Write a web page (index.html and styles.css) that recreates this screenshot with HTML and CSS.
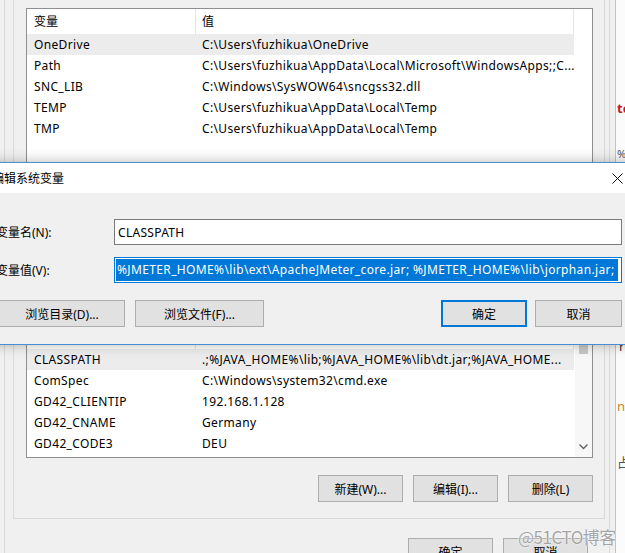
FILE: index.html
```html
<!DOCTYPE html>
<html lang="zh-CN">
<head>
<meta charset="utf-8">
<title>编辑系统变量</title>
<link rel="stylesheet" href="styles.css">
</head>
<body>
<div class="desk">
  <div class="win">
    <div class="frame">
      <div class="group">
        <div class="list list-user">
          <div class="lhead"><span class="h1">变量</span><span class="h2">值</span></div>
          <div class="row sel"><span class="c1">OneDrive</span><span class="c2">C:\Users\fuzhikua\OneDrive</span></div>
          <div class="row"><span class="c1">Path</span><span class="c2">C:\Users\fuzhikua\AppData\Local\Microsoft\WindowsApps;;C...</span></div>
          <div class="row"><span class="c1">SNC_LIB</span><span class="c2">C:\Windows\SysWOW64\sncgss32.dll</span></div>
          <div class="row"><span class="c1">TEMP</span><span class="c2">C:\Users\fuzhikua\AppData\Local\Temp</span></div>
          <div class="row"><span class="c1">TMP</span><span class="c2">C:\Users\fuzhikua\AppData\Local\Temp</span></div>
        </div>
        <div class="spacer"></div>
        <div class="list list-sys">
          <div class="cols">
            <div class="lhead"><span class="h1">变量</span><span class="h2">值</span></div>
            <div class="row sel"><span class="c1">CLASSPATH</span><span class="c2">.;%JAVA_HOME%\lib;%JAVA_HOME%\lib\dt.jar;%JAVA_HOME...</span></div>
            <div class="row"><span class="c1">ComSpec</span><span class="c2">C:\Windows\system32\cmd.exe</span></div>
            <div class="row"><span class="c1">GD42_CLIENTIP</span><span class="c2">192.168.1.128</span></div>
            <div class="row"><span class="c1">GD42_CNAME</span><span class="c2">Germany</span></div>
            <div class="row"><span class="c1">GD42_CODE3</span><span class="c2">DEU</span></div>
          </div>
          <div class="vscroll">
            <div class="thumb"></div>
            <svg class="chev" width="9" height="6" viewBox="0 0 9 6"><path d="M0.5 0.5 L4.5 4.5 L8.5 0.5" fill="none" stroke="#606060" stroke-width="1.3"/></svg>
          </div>
        </div>
        <div class="btnrow">
          <div class="btn">新建(W)...</div>
          <div class="btn">编辑(I)...</div>
          <div class="btn">删除(L)</div>
        </div>
      </div>
      <div class="winbtns">
        <div class="btn">确定</div>
        <div class="btn">取消</div>
      </div>
    </div>
  </div>
  <div class="web">
    <span class="frag f1">te</span>
    <span class="frag f2">%</span>
    <span class="frag f3">r</span>
    <span class="frag f4">n</span>
    <span class="frag f5">占</span>
  </div>
</div>

<div class="dialog">
  <div class="dlg-title">
    <span class="dlg-caption">编辑系统变量</span>
    <div class="close">
      <svg width="11" height="11" viewBox="0 0 11 11"><path d="M0.5 0.5 L10.5 10.5 M10.5 0.5 L0.5 10.5" stroke="#111" stroke-width="1" fill="none"/></svg>
    </div>
  </div>
  <div class="dlg-body">
    <div class="field">
      <span class="label">变量名(N):</span>
      <div class="input">CLASSPATH</div>
    </div>
    <div class="field field2">
      <span class="label">变量值(V):</span>
      <div class="input focus"><span class="selected">%JMETER_HOME%\lib\ext\ApacheJMeter_core.jar; %JMETER_HOME%\lib\jorphan.jar;</span></div>
    </div>
    <div class="dlg-btns">
      <div class="btn b-dir">浏览目录(D)...</div>
      <div class="btn b-file">浏览文件(F)...</div>
      <div class="grow"></div>
      <div class="btn b-ok default">确定</div>
      <div class="btn b-cancel">取消</div>
    </div>
  </div>
</div>

<div class="watermark">@51CTO博客</div>
</body>
</html>
```

FILE: styles.css
```css
* { box-sizing: border-box; margin: 0; padding: 0; }
html, body { width: 625px; height: 553px; overflow: hidden; }
body {
  background: #f0f0f0;
  font-family: "Noto Sans", "Noto Sans CJK SC", sans-serif;
  font-size: 12px;
  color: #000;
  position: relative;
}
.desk { display: flex; height: 553px; }
.win {
  width: 616px;
  flex: none;
  height: 553px;
  border-right: 1px solid #c4c4c4;
  box-shadow: inset -5px 0 0 #f0f0f0, inset -6px 0 0 #dadada;
}
.frame {
  margin-left: 4px;
  border-left: 1px solid #dadada;
  height: 100%;
  padding-left: 8px;
}
.group {
  width: 592px;
  border: 1px solid #d9d9d9;
  border-top: none;
  padding: 8px 11px 16px 12px;
}
.list {
  background: #fff;
  border: 1px solid #8f8f8f;
  width: 567px;
  overflow: hidden;
}
.list-user { height: 160px; }
.spacer { height: 155px; }
.list-sys { height: 135px; display: flex; }
.cols { width: 548px; }
.lhead { display: flex; height: 25px; align-items: center; width: 547px; }
.lhead .h1 {
  width: 169px; height: 25px; line-height: 25px;
  padding-left: 7px; border-right: 1px solid #e5e5e5;
}
.lhead .h2 {
  width: 378px; height: 25px; line-height: 25px;
  padding-left: 6px; border-right: 1px solid #e5e5e5;
}
.row {
  display: flex; height: 21px; line-height: 21px; width: 547px;
  white-space: nowrap; letter-spacing: 0.35px;
}
.row.sel { background: #ececec; }
.row .c1 { width: 175px; padding-left: 7px; flex: none; }
.row .c2 { flex: 1; overflow: hidden; }
.vscroll {
  width: 17px; flex: none;
  background: #f7f7f7;
  display: flex; flex-direction: column; align-items: center;
  justify-content: space-between;
  padding: 21px 0 7px;
}
.thumb { width: 9px; height: 9px; background: #c8c8c8; }
.chev { display: block; }
.btnrow {
  margin-top: 17px;
  display: flex; justify-content: flex-end; gap: 10px;
}
.btn {
  height: 27px;
  background: #e1e1e1;
  border: 1px solid #adadad;
  display: flex; align-items: center; justify-content: center;
  white-space: nowrap;
}
.btnrow .btn { width: 85px; }
.winbtns {
  margin-top: 19px;
  width: 575px;
  display: flex; justify-content: flex-end; gap: 10px;
}
.winbtns .btn { width: 85px; }

.web {
  flex: 1;
  background: #fbfbfb;
  display: flex; flex-direction: column;
  padding-left: 1px;
  font-size: 13px;
  line-height: 16px;
}
.frag { display: block; height: 16px; }
.f1 { margin-top: 100px; color: #c8141e; font-weight: bold; }
.f2 { margin-top: 30px; color: #555; font-size: 11px; }
.f3 { margin-top: 176px; color: #333; padding-left: 2px; }
.f4 { margin-top: 44px; color: #c58a2a; }
.f5 { margin-top: 40px; color: #555; }

.dialog {
  position: absolute;
  top: 162px;
  left: -20px;
  width: 661px;
  height: 183px;
  border: 1px solid #4a8ed0;
  box-shadow: 0 0 12px rgba(0, 0, 0, 0.28);
  font-family: "Noto Sans", "Noto Sans CJK SC", sans-serif;
}
.dlg-title {
  height: 30px;
  background: #fff;
  display: flex; align-items: center;
  padding-left: 11px;
  position: relative;
}
.close {
  position: absolute; right: 0; top: 0;
  width: 46px; height: 30px;
  display: flex; align-items: center; justify-content: center;
}
.close svg { display: block; }
.dlg-body {
  height: 151px;
  background: #f0f0f0;
  padding: 26px 18px 0 15px;
}
.field { display: flex; align-items: center; height: 26px; }
.field2 { margin-top: 12px; }
.label { width: 118px; flex: none; }
.input {
  width: 508px; height: 26px;
  background: #fff;
  border: 1px solid #7a7a7a;
  padding-left: 3px;
  display: flex; align-items: center;
  white-space: nowrap; overflow: hidden;
  letter-spacing: 0.3px;
}
.input.focus { border-color: #0078d7; padding: 1px; letter-spacing: 0.36px; }
.selected {
  background: #0078d7;
  color: #fff;
  height: 22px; line-height: 22px;
  width: 502px;
  overflow: hidden;
  padding-left: 1px;
}
.dlg-btns { margin-top: 17px; display: flex; gap: 10px; }
.b-dir { width: 126px; margin-left: 3px; }
.b-file { width: 129px; }
.grow { flex: 1; }
.b-ok { width: 86px; margin-right: -2px; }
.b-cancel { width: 87px; }
.default { border-color: #0078d7; box-shadow: inset 0 0 0 1px #0078d7; }

.watermark {
  position: absolute;
  left: 518px; top: 527px;
  font-size: 17px;
  line-height: 20px;
  color: #a5a5a5;
  font-family: "Noto Sans CJK SC", sans-serif;
  letter-spacing: -0.5px;
  text-shadow: 0 0 2px #fff, 0 0 1px #fff;
}
```
